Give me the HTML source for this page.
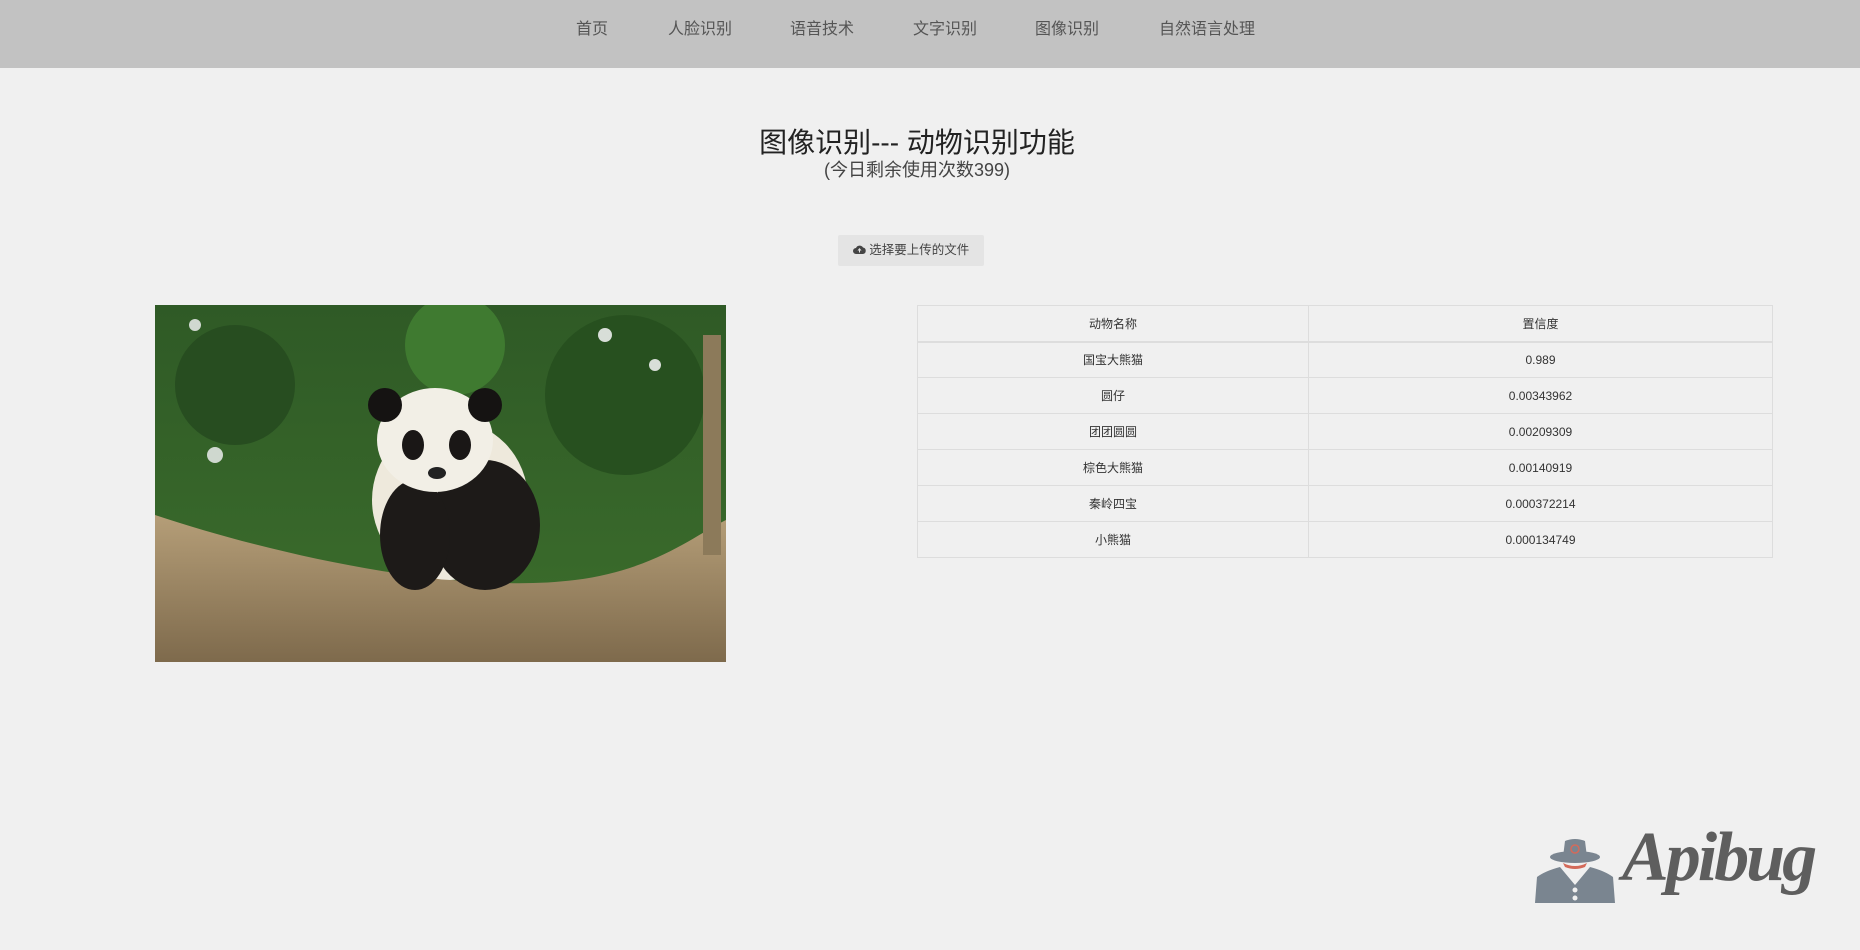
<!DOCTYPE html>
<html><head><meta charset="utf-8"><style>
*{margin:0;padding:0;box-sizing:border-box}
body{width:1860px;height:950px;background:#f0f0f0;font-family:"Liberation Sans","Noto Sans CJK SC",sans-serif;position:relative;overflow:hidden;color:#333}
.nav{position:absolute;left:0;top:0;width:1860px;height:68px;background:#c2c2c2}
.nav span{position:absolute;top:15px;font-size:16px;color:#555}
.t1{position:absolute;left:0;width:1834px;text-align:center;top:121px;font-size:28px;color:#222}
.t2{position:absolute;left:0;width:1834px;text-align:center;top:156px;font-size:18px;color:#444}
.btn{position:absolute;left:838px;top:235px;width:146px;height:31px;background:#e4e4e4;font-size:12.5px;color:#444;line-height:31px;text-align:center;border-radius:2px}
table{position:absolute;left:917px;top:305px;width:856px;border-collapse:collapse;font-size:12px;color:#333}
td,th{border:1px solid #ddd;height:36px;text-align:center;font-weight:normal}
th{border-bottom:2px solid #ddd}
td:first-child,th:first-child{width:391px}
</style></head><body>
<div class="nav">
<span style="left:576px">首页</span><span style="left:668px">人脸识别</span><span style="left:790px">语音技术</span><span style="left:913px">文字识别</span><span style="left:1035px">图像识别</span><span style="left:1159px">自然语言处理</span>
</div>
<div class="t1">图像识别--- 动物识别功能</div>
<div class="t2">(今日剩余使用次数399)</div>
<div class="btn"><svg width="13" height="11" viewBox="0 0 13 11" style="vertical-align:-1px"><path d="M3 10 A3 3 0 0 1 3 4 A4 4 0 0 1 10 3.5 A3.3 3.3 0 0 1 10 10Z" fill="#444"/><path d="M6.5 4 L4.5 6.5 H6 V8.5 H7 V6.5 H8.5Z" fill="#e4e4e4"/></svg> 选择要上传的文件</div>
<svg style="position:absolute;left:155px;top:305px" width="571" height="357" viewBox="0 0 571 357">
<defs><linearGradient id="g" x1="0" y1="0" x2="0" y2="1"><stop offset="0" stop-color="#2f5a26"/><stop offset="1" stop-color="#3c6e2c"/></linearGradient>
<linearGradient id="l" x1="0" y1="0" x2="0" y2="1"><stop offset="0" stop-color="#b59e78"/><stop offset="1" stop-color="#7e6a4c"/></linearGradient></defs>
<rect width="571" height="357" fill="url(#g)"/>
<circle cx="80" cy="80" r="60" fill="#274d20"/><circle cx="470" cy="90" r="80" fill="#27501f"/><circle cx="300" cy="40" r="50" fill="#3f7a30"/>
<circle cx="60" cy="150" r="8" fill="#cfd8cf"/><circle cx="40" cy="20" r="6" fill="#d0d8d0"/><circle cx="450" cy="30" r="7" fill="#d8ded8"/><circle cx="500" cy="60" r="6" fill="#d8ded8"/>
<path d="M0 210 C120 250 300 290 420 275 C500 265 540 230 571 215 L571 357 L0 357Z" fill="url(#l)"/>
<rect x="548" y="30" width="18" height="220" fill="#8c7a5a"/>
<ellipse cx="295" cy="195" rx="78" ry="80" fill="#eee9dc"/>
<ellipse cx="330" cy="220" rx="55" ry="65" fill="#1d1a18"/>
<ellipse cx="260" cy="230" rx="35" ry="55" fill="#1d1a18"/>
<ellipse cx="280" cy="135" rx="58" ry="52" fill="#f2efe6"/>
<circle cx="230" cy="100" r="17" fill="#151312"/><circle cx="330" cy="100" r="17" fill="#151312"/>
<ellipse cx="258" cy="140" rx="11" ry="15" fill="#1a1716"/><ellipse cx="305" cy="140" rx="11" ry="15" fill="#1a1716"/>
<ellipse cx="282" cy="168" rx="9" ry="6" fill="#222"/>
</svg>
<table><tr><th>动物名称</th><th>置信度</th></tr>
<tr><td>国宝大熊猫</td><td>0.989</td></tr>
<tr><td>圆仔</td><td>0.00343962</td></tr>
<tr><td>团团圆圆</td><td>0.00209309</td></tr>
<tr><td>棕色大熊猫</td><td>0.00140919</td></tr>
<tr><td>秦岭四宝</td><td>0.000372214</td></tr>
<tr><td>小熊猫</td><td>0.000134749</td></tr></table>
<svg style="position:absolute;left:1535px;top:835px" width="80" height="68" viewBox="0 0 80 68">
<ellipse cx="40" cy="22" rx="25" ry="6" fill="#7a8590"/><path d="M28 22 L30 6 Q40 2 50 6 L52 22Z" fill="#7a8590"/>
<circle cx="40" cy="14" r="4" fill="none" stroke="#d46a5a" stroke-width="1.5"/>
<path d="M28 28 Q40 34 52 28 L50 32 Q40 36 30 32Z" fill="#d46a5a"/>
<path d="M0 68 L2 42 Q10 36 25 32 L40 50 L55 32 Q70 36 78 42 L80 68Z" fill="#7a8590"/>
<circle cx="40" cy="55" r="2.5" fill="#f0f0f0"/><circle cx="40" cy="63" r="2.5" fill="#f0f0f0"/>
</svg>
<div style="position:absolute;left:1622px;top:818px;font-family:'Liberation Serif',serif;font-style:italic;font-weight:bold;font-size:70px;color:#5e5e5e;letter-spacing:-3px">Apibug</div>
</body></html>
